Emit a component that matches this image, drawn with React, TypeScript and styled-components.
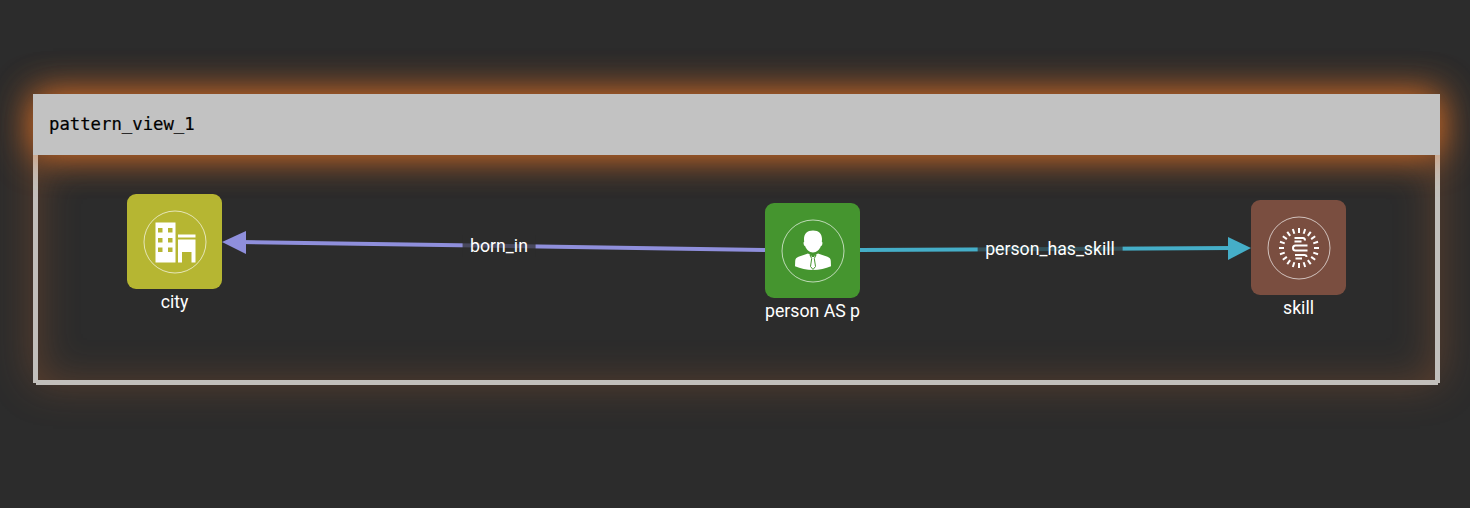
import React from "react";
import styled, { createGlobalStyle } from "styled-components";

const Global = createGlobalStyle`
  html, body { margin: 0; padding: 0; height: 100%; background: #2c2c2c; overflow: hidden; }
  #root { height: 100%; }
`;

const Page = styled.main`
  width: 1470px;
  height: 508px;
  box-sizing: border-box;
  padding: 94px 30px 0 33px;
  background: #2c2c2c;
  font-family: Roboto, "Liberation Sans", sans-serif;
`;

const Frame = styled.section`
  width: 1407px;
  height: 289px;
  display: flex;
  flex-direction: column;
  box-shadow: 0 0 40px rgba(205, 110, 50, 0.3);
`;

const Header = styled.header`
  position: relative;
  z-index: 1;
  flex: 0 0 61px;
  box-sizing: border-box;
  display: flex;
  align-items: center;
  padding: 0 0 2px 16px;
  background: #c2c2c2;
  color: #000;
  font: 17.3px "DejaVu Sans Mono", monospace;
  -webkit-text-stroke: 0.2px #000;
  box-shadow: 0 0 36px rgba(232, 115, 35, 0.95);
`;

const Canvas = styled.div`
  position: relative;
  flex: 1;
  border: solid #c2bfbb;
  border-width: 0 5px;
  box-shadow: inset 0 0 40px rgba(205, 110, 50, 0.3);

  &::after {
    content: "";
    position: absolute;
    left: -2px;
    right: -3px;
    bottom: -2px;
    height: 5px;
    background: #c2bfbb;
  }
`;

const Edges = styled.svg`
  position: absolute;
  left: -5px;
  top: 0;
  width: 1407px;
  height: 228px;
  overflow: visible;
`;

const Node = styled.figure<{ $x: number; $y: number }>`
  position: absolute;
  left: ${(p) => p.$x - 38}px;
  top: ${(p) => p.$y - 155}px;
  width: 95px;
  margin: 0;
  display: flex;
  flex-direction: column;
  align-items: center;
  gap: 2px;
`;

const Tile = styled.div<{ $color: string }>`
  width: 95px;
  height: 95px;
  border-radius: 9px;
  background: ${(p) => p.$color};
  display: flex;
  align-items: center;
  justify-content: center;
`;

const Ring = styled.svg`
  width: 64px;
  height: 64px;
`;

const Caption = styled.figcaption`
  color: #fff;
  font-size: 17.7px;
  line-height: 23px;
  white-space: nowrap;
`;

const EdgeLabel = styled.span<{ $x: number; $y: number }>`
  position: absolute;
  left: ${(p) => p.$x - 38}px;
  top: ${(p) => p.$y - 155}px;
  transform: translate(-50%, -50%);
  padding: 0 7.5px;
  background: rgba(44, 44, 44, 0.72);
  color: #fff;
  font-size: 17.7px;
  line-height: 21px;
  white-space: nowrap;
`;

const ticks = Array.from({ length: 20 }, (_, i) => (i * 18 * Math.PI) / 180);

const Circle = () => <circle cx="32" cy="32" r="31" fill="none" stroke="#fff" strokeOpacity="0.65" strokeWidth="1" />;

const CityIcon = () => (
  <Ring viewBox="0 0 64 64">
    <Circle />
    <path
      fill="#fff"
      fillRule="evenodd"
      d="M12.500 12.500h20v40h-20zM15 18v4.500h4.500V18zM25 18v4.500h4.500V18zM15 28v4.500h4.500V28zM25 28v4.500h4.500V28zM15 37.500v4.500h4.500v-4.500zM25 37.500v4.500h4.500v-4.500z"
    />
    <path fill="#fff" d="M35 24.500h17.500v3H35zM35 29.500h17.500v23h-4v-10.500h-9.500v10.500h-4z" />
  </Ring>
);

const PersonIcon = () => (
  <Ring viewBox="0 0 64 64">
    <Circle />
    <path
      fill="#fff"
      d="M32 11.500c-5.800 0-9 3.400-9 8.500 0 1 .1 2 .2 2.800-.7.300-.8 1.300-.5 2.400.3 1.100.8 1.700 1.400 1.800.9 3.200 4.300 6.500 7.900 6.500s7-3.300 7.900-6.500c.6-.1 1.100-.7 1.400-1.800.3-1.100.2-2.100-.5-2.400.1-.8.200-1.800.2-2.800 0-5.100-3.200-8.500-9-8.500z"
    />
    <path
      fill="#fff"
      d="M27 34.500l-9.500 3.300c-2 .7-3.200 2.200-3.300 4.200L14 47.300c5.500 2.400 11.500 3.700 18 3.700s12.500-1.300 18-3.700l-.2-5.300c-.1-2-1.300-3.500-3.300-4.200L37 34.500 32 37.500z"
    />
    <path
      fill="#fff"
      stroke="#45952f"
      strokeWidth="1"
      strokeLinejoin="round"
      d="M29 36l1.700 3.500-1.200 8 2.500 3 2.500-3-1.200-8L35 36l-3 1.800z"
    />
  </Ring>
);

const SkillIcon = () => (
  <Ring viewBox="0 0 64 64">
    <Circle />
    <g stroke="#fff" strokeWidth="2" fill="none">
      {ticks.map((a) => (
        <line
          key={a}
          x1={32 + 15 * Math.cos(a)}
          y1={32 + 15 * Math.sin(a)}
          x2={32 + 20 * Math.cos(a)}
          y2={32 + 20 * Math.sin(a)}
        />
      ))}
      <path d="M27.500 22h8.500c1.500 0 2 1 2 2.500M27.500 25.500h7" />
      <path d="M40.500 29.500h-12c-2 0-2.500 1-2.500 2.500s.5 2.500 2.500 2.500h12" />
      <path d="M28 39h9.500c1.500 0 2 .5 2 2M28.500 42.500h6.500" />
    </g>
  </Ring>
);

export default function App() {
  return (
    <>
      <Global />
      <Page>
        <Frame>
          <Header>pattern_view_1</Header>
          <Canvas>
            <Edges viewBox="0 155 1407 228">
              <g transform="translate(-33 0)">
                <line x1="765" y1="250" x2="240" y2="242" stroke="#8f8fdc" strokeWidth="4" />
                <polygon points="222,242 246,231 246,254" fill="#8f8fdc" />
                <line x1="860" y1="250" x2="1232" y2="248" stroke="#45aec8" strokeWidth="4" />
                <polygon points="1251,248 1228,237 1228,260" fill="#45aec8" />
              </g>
            </Edges>
            <EdgeLabel $x={499} $y={246}>born_in</EdgeLabel>
            <EdgeLabel $x={1050} $y={249}>person_has_skill</EdgeLabel>
            <Node $x={127} $y={194}>
              <Tile $color="#b6b632"><CityIcon /></Tile>
              <Caption>city</Caption>
            </Node>
            <Node $x={765} $y={203}>
              <Tile $color="#45952f"><PersonIcon /></Tile>
              <Caption>person AS p</Caption>
            </Node>
            <Node $x={1251} $y={200}>
              <Tile $color="#7a4e40"><SkillIcon /></Tile>
              <Caption>skill</Caption>
            </Node>
          </Canvas>
        </Frame>
      </Page>
    </>
  );
}
